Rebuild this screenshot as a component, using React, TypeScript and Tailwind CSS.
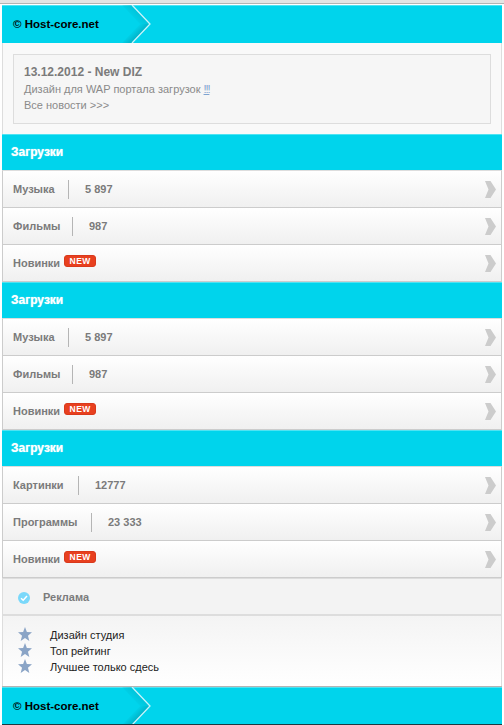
import React from 'react'

const Chevron = () => (
  <svg width="11" height="17" viewBox="0 0 11 17" className="shrink-0">
    <path d="M0 0H5.5L11 8.5L5.5 17H0L3.5 8.5Z" fill="#cccccc" />
  </svg>
)

const Logo = ({ id }: { id: string }) => (
  <div className="relative h-[38px] bg-[#00d4ec] border-t border-[#4fe3f3]">
    <div className="h-full pl-[11px] flex items-center">
      <span className="text-[11.5px] font-bold text-black">© Host-core.net</span>
    </div>
    {/* arrow with the soft shadow on its inner side */}
    <svg width="40" height="38" viewBox="0 0 40 38" className="absolute left-[110px] -top-px">
      <defs>
        <linearGradient id={`${id}-top`} gradientUnits="userSpaceOnUse" x1="12" y1="7" x2="18" y2="1">
          <stop offset="0" stopColor="#00a5ba" stopOpacity="0" />
          <stop offset="1" stopColor="#00a5ba" stopOpacity="0.3" />
        </linearGradient>
        <linearGradient id={`${id}-bottom`} gradientUnits="userSpaceOnUse" x1="23" y1="23" x2="29" y2="29">
          <stop offset="0" stopColor="#0093a6" stopOpacity="0" />
          <stop offset="1" stopColor="#0093a6" stopOpacity="0.55" />
        </linearGradient>
      </defs>
      <path d="M20 0L38 19L28 19L10 0Z" fill={`url(#${id}-top)`} />
      <path d="M38 19L20 38L10 38L28 19Z" fill={`url(#${id}-bottom)`} />
      <path d="M20 0L38 19L20 38" fill="none" stroke="#c8f4fa" strokeWidth="1.3" />
    </svg>
  </div>
)

const SectionHead = ({ title }: { title: string }) => (
  <div className="h-[36px] pl-[9px] pb-[2px] flex items-center bg-[#00d4ec] border-t border-[#4fe3f3] text-[12px] font-bold text-white [text-shadow:0_0_1px_rgba(255,255,255,0.8)]">
    {title}
  </div>
)

type RowData = { label: string; labelWidth?: string; value?: string; isNew?: boolean }

const Row = ({ label, labelWidth, value, isNew }: RowData) => (
  <div className="h-[37px] flex items-center pl-[10px] pr-[5px] border-b border-[#cccccc] bg-gradient-to-b from-white to-[#f0f0f0] text-[11px] font-bold text-[#7b7b7b]">
    <span className={labelWidth}>{label}</span>
    {value && (
      <>
        <span className="w-px h-[19px] bg-[#b5b5b5] ml-[13px] mr-[16px]" />
        <span>{value}</span>
      </>
    )}
    {isNew && (
      <span className="ml-[4px] mb-[4px] w-[32px] h-[12px] text-center rounded-[3px] border border-[#d9391c] bg-[#e8401f] text-white text-[8.5px] leading-[10px] tracking-[0.4px]">
        NEW
      </span>
    )}
    <span className="ml-auto flex">
      <Chevron />
    </span>
  </div>
)

const Star = () => (
  <svg width="14" height="14" viewBox="0 0 24 24" className="shrink-0 mb-[2px]">
    <path d="M12 0L15.2 8.6L24 9.2L17.1 14.8L19.4 24L12 18.9L4.6 24L6.9 14.8L0 9.2L8.8 8.6Z" fill="#8aa4c6" />
  </svg>
)

const sections: { rows: RowData[] }[] = [
  {
    rows: [
      { label: 'Музыка', labelWidth: 'w-[42px]', value: '5 897' },
      { label: 'Фильмы', labelWidth: 'w-[46px]', value: '987' },
      { label: 'Новинки', isNew: true },
    ],
  },
  {
    rows: [
      { label: 'Музыка', labelWidth: 'w-[42px]', value: '5 897' },
      { label: 'Фильмы', labelWidth: 'w-[46px]', value: '987' },
      { label: 'Новинки', isNew: true },
    ],
  },
  {
    rows: [
      { label: 'Картинки', labelWidth: 'w-[52px]', value: '12777' },
      { label: 'Программы', labelWidth: 'w-[65px]', value: '23 333' },
      { label: 'Новинки', isNew: true },
    ],
  },
]

const promo = ['Дизайн студия', 'Топ рейтинг', 'Лучшее только сдесь']

export default function App() {
  return (
    <div className="w-[504px] h-[725px] overflow-hidden bg-white font-['Liberation_Sans',Arial,sans-serif]">
      <div className="h-[3px] bg-[#e4e4e4]" />
      <div className="h-px bg-[#b4b4b4]" />
      <div className="mx-[2px] w-[500px] pt-[1px]">
        <Logo id="top" />
        <div className="h-[91px] px-[10px] pt-[11px] bg-[#f9f9f9] border-x border-[#dddddd]">
          <div className="h-[70px] border border-[#dddddd] bg-[#f6f6f6] pl-[10px] pt-[9px] text-[11px] leading-[16px] text-[#8a8a8a]">
            <div className="text-[12px] font-bold leading-[17px] text-[#7b7b7b]">13.12.2012 - New DIZ</div>
            <div className="h-[16px]">
              Дизайн для WAP портала загрузок <span className="tracking-[-1.1px] text-[#7ea3d0] underline">!!!</span>
            </div>
            <div>Все новости &gt;&gt;&gt;</div>
          </div>
        </div>
        {sections.map((section, i) => (
          <div key={i}>
            <SectionHead title="Загрузки" />
            <div className="border-x border-t border-x-[#cccccc] border-t-[#dddddd]">
              {section.rows.map(row => (
                <Row key={row.label} {...row} />
              ))}
            </div>
          </div>
        ))}
        <div className="h-[38px] flex items-center pl-[15px] pt-[2px] bg-[#f3f3f3] border-x border-t border-b-2 border-[#dddddd] text-[11px] font-bold text-[#7b7b7b]">
          <svg width="12" height="12" viewBox="0 0 12 12" className="shrink-0">
            <circle cx="6" cy="6" r="6" fill="#7ad8fa" />
            <path d="M3 6.2L5.2 8.2L9 4" fill="none" stroke="white" strokeWidth="1.5" />
          </svg>
          <span className="ml-[13px]">Реклама</span>
        </div>
        <div className="h-[70px] pt-[11px] pl-[15px] border-x border-[#dddddd] bg-gradient-to-b from-[#f4f4f4] to-white text-[11px] leading-[16px] text-[#222222]">
          {promo.map(text => (
            <div key={text} className="flex items-center gap-[18px]">
              <Star />
              <span>{text}</span>
            </div>
          ))}
        </div>
        <div className="h-px bg-[#b4b4b4]" />
        <div className="h-[37px] overflow-hidden">
          <Logo id="bottom" />
        </div>
        <div className="h-px bg-[#1c3a40]" />
      </div>
    </div>
  )
}
